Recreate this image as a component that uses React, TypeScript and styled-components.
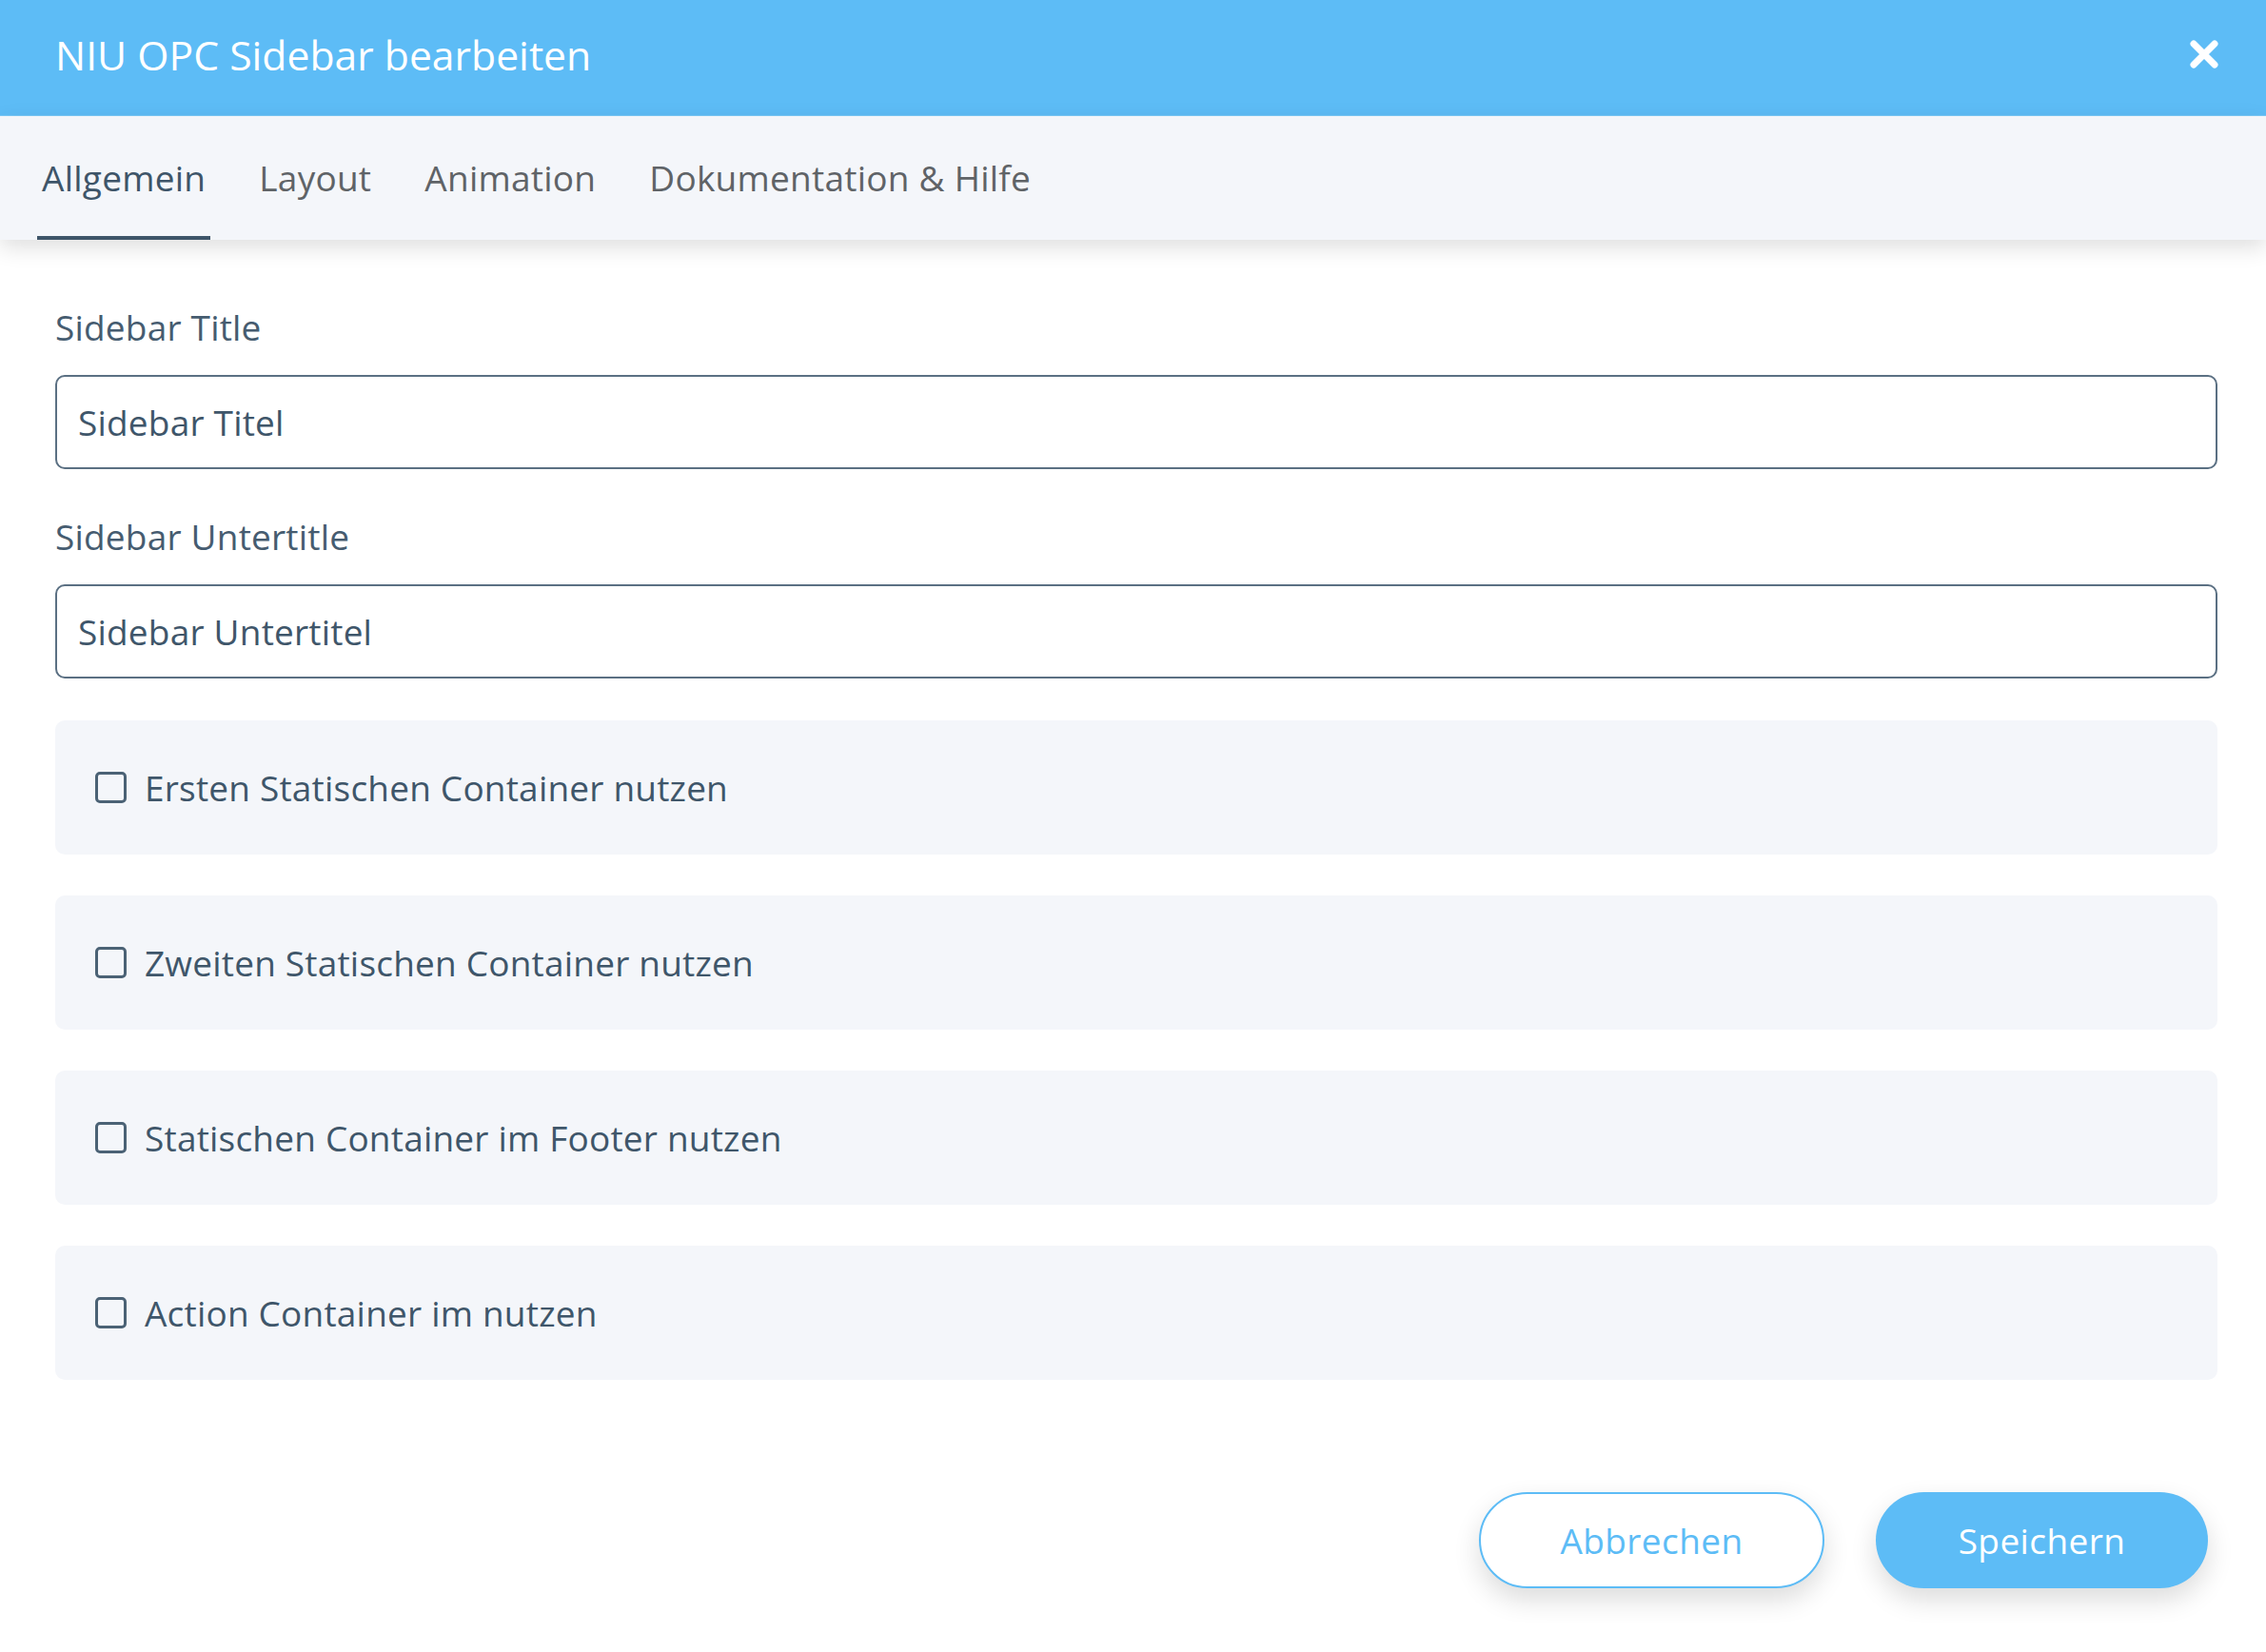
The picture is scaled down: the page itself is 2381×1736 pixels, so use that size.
import * as React from 'react';
import styled, { createGlobalStyle } from 'styled-components';

const GlobalStyle = createGlobalStyle`
  html, body {
    margin: 0;
    padding: 0;
    background: #FFFFFF;
  }
  body {
    font-family: "Open Sans", "Noto Sans", sans-serif;
    -webkit-font-smoothing: antialiased;
  }
  * {
    box-sizing: border-box;
  }
`;

const tabs = ['Allgemein', 'Layout', 'Animation', 'Dokumentation & Hilfe'];

const options = [
  'Ersten Statischen Container nutzen',
  'Zweiten Statischen Container nutzen',
  'Statischen Container im Footer nutzen',
  'Action Container im nutzen'
];

const App = () => {
  const [active, setActive] = React.useState(0);
  const [checked, setChecked] = React.useState<boolean[]>(options.map(() => false));

  const toggle = (i: number) => {
    setChecked(prev => prev.map((c, j) => (j === i ? !c : c)));
  };

  return (
    <Dialog>
      <GlobalStyle />
      <Header>
        <Title>NIU OPC Sidebar bearbeiten</Title>
        <CloseButton aria-label="Schließen">
          <svg width="30" height="30" viewBox="0 0 30 30">
            <path d="M4 4 L26 26 M26 4 L4 26" stroke="#FFFFFF" strokeWidth="7" strokeLinecap="round" />
          </svg>
        </CloseButton>
      </Header>

      <TabBar>
        {tabs.map((t, i) => (
          <Tab key={t} active={i === active} onClick={() => setActive(i)}>
            {t}
          </Tab>
        ))}
      </TabBar>

      <Content>
        <Field>
          <Label>Sidebar Title</Label>
          <Input defaultValue="Sidebar Titel" />
        </Field>
        <Field>
          <Label>Sidebar Untertitle</Label>
          <Input defaultValue="Sidebar Untertitel" />
        </Field>

        <OptionList>
          {options.map((o, i) => (
            <OptionRow key={o} onClick={() => toggle(i)}>
              <CheckBox checked={checked[i]} />
              <OptionText>{o}</OptionText>
            </OptionRow>
          ))}
        </OptionList>

        <Footer>
          <GhostButton>Abbrechen</GhostButton>
          <PrimaryButton>Speichern</PrimaryButton>
        </Footer>
      </Content>
    </Dialog>
  );
};

const Dialog = styled.div`
  width: 100%;
  min-height: 1736px;
  background: #FFFFFF;
  color: #3f566a;
`;

const Header = styled.header`
  height: 122px;
  display: flex;
  align-items: center;
  justify-content: space-between;
  padding: 0 50px 0 58px;
  background: #5dbcf6;
  border-bottom: 1px solid #7ccaf8;
`;

const Title = styled.h1`
  margin: 0;
  font-size: 42.7px;
  font-weight: 400;
  color: #FFFFFF;
  margin-top: -6px;
`;

const CloseButton = styled.button`
  display: flex;
  padding: 0;
  border: 0;
  background: transparent;
  cursor: pointer;
  margin-top: -8px;
`;

const TabBar = styled.nav`
  position: relative;
  z-index: 1;
  height: 130px;
  display: flex;
  align-items: stretch;
  gap: 46px;
  padding: 0 0 0 39px;
  background: #f4f6fa;
  box-shadow: 0 8px 22px rgba(0, 0, 0, 0.13);
`;

const Tab = styled.div<{ active?: boolean }>`
  display: flex;
  align-items: center;
  padding: 3px 5px 0;
  font-size: 37px;
  letter-spacing: 0.25px;
  color: ${p => (p.active ? '#3e5569' : '#5f6367')};
  border-bottom: 4px solid ${p => (p.active ? '#3e5569' : 'transparent')};
  cursor: pointer;
`;

const Content = styled.main`
  padding: 65px 51px 0 58px;
`;

const Field = styled.div`
  display: flex;
  flex-direction: column;
  gap: 23px;
  margin-bottom: 44px;
`;

const Label = styled.label`
  font-size: 37px;
  letter-spacing: 0.2px;
  line-height: 54px;
  color: #465c70;
`;

const Input = styled.input`
  height: 99px;
  width: 100%;
  padding: 0 22px;
  border: 2px solid #5b7083;
  border-radius: 10px;
  font-family: "Open Sans", "Noto Sans", sans-serif;
  font-size: 37px;
  letter-spacing: 0.2px;
  color: #3f566a;
  background: #FFFFFF;
  outline: none;
`;

const OptionList = styled.div`
  display: flex;
  flex-direction: column;
  gap: 43px;
  margin-top: 1px;
`;

const OptionRow = styled.div`
  height: 141px;
  display: flex;
  align-items: center;
  padding-left: 42px;
  background: #f4f6fa;
  border-radius: 10px;
  cursor: pointer;
`;

const CheckBox = styled.span<{ checked?: boolean }>`
  width: 33px;
  height: 33px;
  border: 3.5px solid #4b6275;
  border-radius: 5px;
  background: ${p => (p.checked ? '#4b6275' : 'transparent')};
  margin-right: 19px;
  flex-shrink: 0;
`;

const OptionText = styled.span`
  font-size: 37px;
  letter-spacing: 0.2px;
  color: #3f566a;
`;

const Footer = styled.div`
  display: flex;
  justify-content: flex-end;
  gap: 54px;
  padding: 118px 10px 0 0;
`;

const PillButton = styled.button`
  height: 101px;
  border-radius: 51px;
  font-family: "Open Sans", "Noto Sans", sans-serif;
  font-size: 37px;
  letter-spacing: 0.4px;
  cursor: pointer;
  box-shadow: 0 12px 28px rgba(0, 0, 0, 0.14);
`;

const GhostButton = styled(PillButton)`
  width: 363px;
  background: #FFFFFF;
  border: 2px solid #5dbcf6;
  color: #5dbcf6;
`;

const PrimaryButton = styled(PillButton)`
  width: 349px;
  background: #5dbcf6;
  border: 0;
  color: #FFFFFF;
`;

export default App;
